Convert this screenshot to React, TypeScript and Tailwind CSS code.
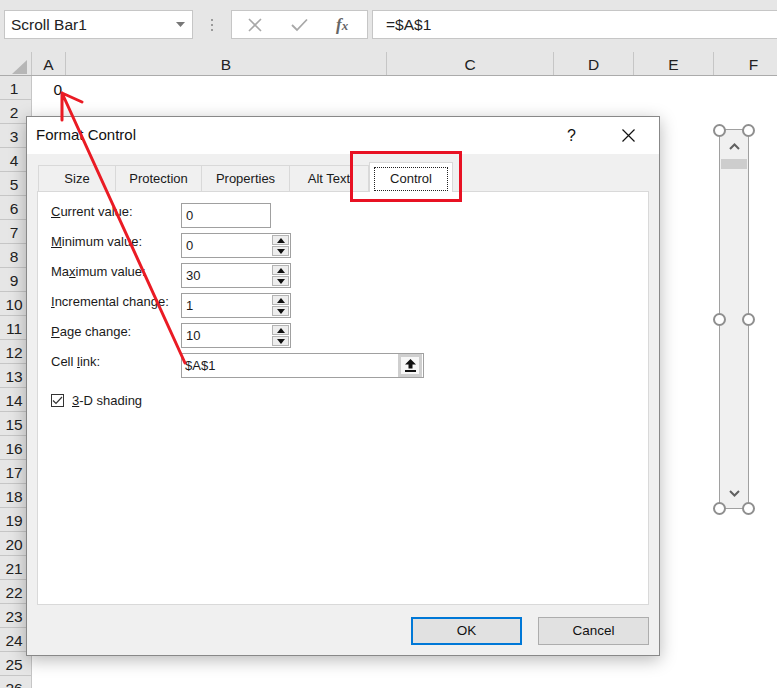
import React from "react";

const columns = [
  { name: "A", width: 34 },
  { name: "B", width: 321 },
  { name: "C", width: 167 },
  { name: "D", width: 80 },
  { name: "E", width: 80 },
  { name: "F", width: 80 },
];

const rows = Array.from({ length: 26 }, (_, i) => i + 1);

function SpinBox({ value }: { value: string }) {
  return (
    <div className="flex h-[25px] w-[110px] border border-[#a0a0a0] bg-white">
      <div className="flex flex-1 items-center pl-[4px] text-[13px] text-[#1a1a1a]">{value}</div>
      <div className="flex w-[19px] flex-col gap-[1px] bg-white p-[1px]">
        <div className="flex flex-1 items-center justify-center border border-[#b4b4b4] bg-[#ededed]">
          <svg width="8" height="5" viewBox="0 0 8 5">
            <polygon points="0,5 8,5 4,0" fill="#111" />
          </svg>
        </div>
        <div className="flex flex-1 items-center justify-center border border-[#b4b4b4] bg-[#ededed]">
          <svg width="8" height="5" viewBox="0 0 8 5">
            <polygon points="0,0 8,0 4,5" fill="#111" />
          </svg>
        </div>
      </div>
    </div>
  );
}

function Field({ label, children }: { label: React.ReactNode; children: React.ReactNode }) {
  return (
    <div className="flex h-[25px] items-start">
      <div className="w-[130px] text-[13px] leading-[18px] text-[#1a1a1a]">{label}</div>
      {children}
    </div>
  );
}

function Handle({ className }: { className: string }) {
  return <div className={`absolute h-[13px] w-[13px] rounded-full border-2 border-[#8f8f8f] bg-white ${className}`} />;
}

export default function App() {
  return (
    <div className="relative h-[688px] w-[777px] overflow-hidden bg-white font-['Liberation_Sans',Arial,sans-serif]">
      {/* formula bar */}
      <div className="flex h-[52px] items-start bg-[#e6e6e6] pt-[10px]">
        <div className="ml-[4px] flex h-[29px] w-[189px] items-center justify-between border border-[#c6c6c6] bg-white pl-[6px] pr-[7px]">
          <span className="text-[15.5px] text-[#222]">Scroll Bar1</span>
          <svg width="9" height="5" viewBox="0 0 9 5">
            <polygon points="0,0 9,0 4.5,5" fill="#777" />
          </svg>
        </div>
        <div className="ml-[16px] flex h-[29px] w-[6px] flex-col items-center justify-center gap-[3px]">
          <div className="h-[2px] w-[2px] bg-[#9a9a9a]" />
          <div className="h-[2px] w-[2px] bg-[#9a9a9a]" />
          <div className="h-[2px] w-[2px] bg-[#9a9a9a]" />
        </div>
        <div className="ml-[16px] flex h-[29px] w-[137px] items-center border border-[#c6c6c6] bg-white">
          <svg className="ml-[15px]" width="16" height="16" viewBox="0 0 16 16">
            <path d="M2 2 L14 14 M14 2 L2 14" stroke="#a8a8a8" strokeWidth="1.6" />
          </svg>
          <svg className="ml-[28px]" width="17" height="14" viewBox="0 0 17 14">
            <path d="M1 7 L6 12 L16 1.5" stroke="#a8a8a8" strokeWidth="1.8" fill="none" />
          </svg>
          <span className="ml-[28px] font-['Liberation_Serif',serif] text-[17px] font-bold italic text-[#666]">
            f<span className="text-[13px]">x</span>
          </span>
        </div>
        <div className="ml-[4px] flex h-[29px] flex-1 items-center border border-r-0 border-[#c6c6c6] bg-white pl-[13px] text-[15.5px] text-[#222]">
          =$A$1
        </div>
      </div>

      {/* column headers */}
      <div className="flex h-[24px] border-b border-[#ababab] bg-[#e6e6e6]">
        <div className="relative w-[32px] shrink-0 border-r border-[#c6c6c6]">
          <svg className="absolute left-[12px] top-[8px]" width="15" height="14" viewBox="0 0 15 14">
            <polygon points="15,0 15,14 0,14" fill="#b6b6b6" />
          </svg>
        </div>
        {columns.map((c) => (
          <div
            key={c.name}
            style={{ width: c.width }}
            className="flex shrink-0 items-center justify-center border-r border-[#c6c6c6] pt-[2px] text-[15.5px] text-[#222]"
          >
            {c.name}
          </div>
        ))}
      </div>

      {/* rows */}
      {rows.map((r) => (
        <div key={r} className="flex h-[24px]">
          <div className="flex w-[32px] shrink-0 items-center justify-center border-b border-r border-[#c6c6c6] bg-[#e6e6e6] pr-[3px] pt-[3px] text-[15.5px] text-[#222]">
            {r}
          </div>
          <div className="flex w-[34px] shrink-0 items-center justify-end pr-[4px] pt-[3px] text-[15.5px] text-[#111]">
            {r === 1 ? "0" : ""}
          </div>
        </div>
      ))}

      {/* scroll bar control */}
      <div className="absolute left-[719px] top-[129px] h-[380px] w-[30px] border border-[#a0a0a0] bg-[#f0f0f0]">
        <svg className="absolute left-[9px] top-[13px]" width="11" height="7" viewBox="0 0 11 7">
          <path d="M1 6 L5.5 1.5 L10 6" stroke="#606060" strokeWidth="2" fill="none" />
        </svg>
        <div className="absolute left-[1px] top-[29px] h-[10px] w-[26px] bg-[#cdcdcd]" />
        <svg className="absolute bottom-[11px] left-[9px]" width="11" height="7" viewBox="0 0 11 7">
          <path d="M1 1 L5.5 5.5 L10 1" stroke="#606060" strokeWidth="2" fill="none" />
        </svg>
      </div>
      <Handle className="left-[713px] top-[124px]" />
      <Handle className="left-[742px] top-[124px]" />
      <Handle className="left-[713px] top-[313px]" />
      <Handle className="left-[742px] top-[313px]" />
      <Handle className="left-[713px] top-[502px]" />
      <Handle className="left-[742px] top-[502px]" />

      {/* dialog */}
      <div className="absolute left-[26px] top-[116px] flex h-[540px] w-[634px] flex-col border border-[#888] bg-[#f0f0f0] shadow-[0_4px_16px_rgba(0,0,0,0.28)]">
        <div className="flex h-[37px] shrink-0 items-center bg-white pl-[9px]">
          <span className="text-[15px] text-[#111]">Format Control</span>
          <span className="ml-auto mr-[46px] text-[16px] text-[#111]">?</span>
          <svg className="mr-[24px]" width="13" height="13" viewBox="0 0 13 13">
            <path d="M0.5 0.5 L12.5 12.5 M12.5 0.5 L0.5 12.5" stroke="#111" strokeWidth="1.2" />
          </svg>
        </div>
        <div className="flex flex-1 flex-col px-[10px] pt-[8px]">
          <div className="flex h-[29px] items-end pl-[1px] text-[13px] text-[#1a1a1a]">
            <div className="flex h-[26px] w-[78px] items-center justify-center border border-b-0 border-[#d9d9d9]">Size</div>
            <div className="flex h-[26px] w-[86px] items-center justify-center border border-b-0 border-l-0 border-[#d9d9d9]">Protection</div>
            <div className="flex h-[26px] w-[88px] items-center justify-center border border-b-0 border-l-0 border-[#d9d9d9]">Properties</div>
            <div className="flex h-[26px] w-[79px] items-center justify-center border border-b-0 border-l-0 border-[#d9d9d9]">Alt Text</div>
            <div className="relative z-10 mb-[-1px] flex h-[30px] w-[84px] items-center justify-center border border-b-0 border-[#d9d9d9] bg-white px-[4px] pb-[1px] pt-[4px]">
              <div className="flex h-full w-full items-center justify-center border border-dotted border-[#222]">Control</div>
            </div>
          </div>
          <div className="flex h-[414px] flex-col gap-[5px] border border-[#d9d9d9] bg-white pl-[13px] pt-[11px]">
            <Field label={<><u>C</u>urrent value:</>}>
              <div className="flex h-[25px] w-[90px] items-center border border-[#a0a0a0] pl-[4px] text-[13px] text-[#1a1a1a]">0</div>
            </Field>
            <Field label={<><u>M</u>inimum value:</>}>
              <SpinBox value="0" />
            </Field>
            <Field label={<>Ma<u>x</u>imum value:</>}>
              <SpinBox value="30" />
            </Field>
            <Field label={<><u>I</u>ncremental change:</>}>
              <SpinBox value="1" />
            </Field>
            <Field label={<><u>P</u>age change:</>}>
              <SpinBox value="10" />
            </Field>
            <Field label={<>Cell <u>l</u>ink:</>}>
              <div className="flex h-[25px] w-[243px] items-center border border-[#a0a0a0] bg-white">
                <span className="flex-1 pl-[3px] text-[13px] text-[#1a1a1a]">$A$1</span>
                <div className="mr-[1px] flex h-[23px] w-[24px] items-center justify-center border-[3px] border-[#cfcfcf] bg-[#f7f7f7]">
                  <svg width="11" height="13" viewBox="0 0 11 13">
                    <polygon points="5.5,0 11,5.5 7.5,5.5 7.5,9.5 3.5,9.5 3.5,5.5 0,5.5" fill="#111" />
                    <rect x="0" y="11" width="11" height="2" fill="#111" />
                  </svg>
                </div>
              </div>
            </Field>
            <div className="mt-[8px] flex items-center">
              <div className="flex h-[13px] w-[13px] items-center justify-center border border-[#333] bg-white">
                <svg width="11" height="9" viewBox="0 0 11 9">
                  <path d="M1 4.5 L4 7.5 L10 1" stroke="#333" strokeWidth="1.2" fill="none" />
                </svg>
              </div>
              <span className="ml-[8px] text-[13px] text-[#1a1a1a]">
                <u>3</u>-D shading
              </span>
            </div>
          </div>
          <div className="mt-[12px] flex justify-end gap-[16px]">
            <div className="flex h-[28px] w-[111px] items-center justify-center border-2 border-[#0078d7] bg-[#e1e1e1] text-[13.5px] text-[#111]">
              OK
            </div>
            <div className="flex h-[28px] w-[111px] items-center justify-center border border-[#adadad] bg-[#e1e1e1] text-[13.5px] text-[#111]">
              Cancel
            </div>
          </div>
        </div>
      </div>

      {/* annotations */}
      <div className="absolute left-[350px] top-[151px] z-30 h-[51px] w-[112px] border-[3px] border-[#e81123]" />
      <svg className="pointer-events-none absolute left-0 top-0 z-30" width="777" height="688" viewBox="0 0 777 688">
        <path d="M62 93 L185 363 M62 93 L82 102 M62 93 L62 120" stroke="#ea1b24" strokeWidth="3" fill="none" strokeLinecap="round" />
      </svg>
    </div>
  );
}
